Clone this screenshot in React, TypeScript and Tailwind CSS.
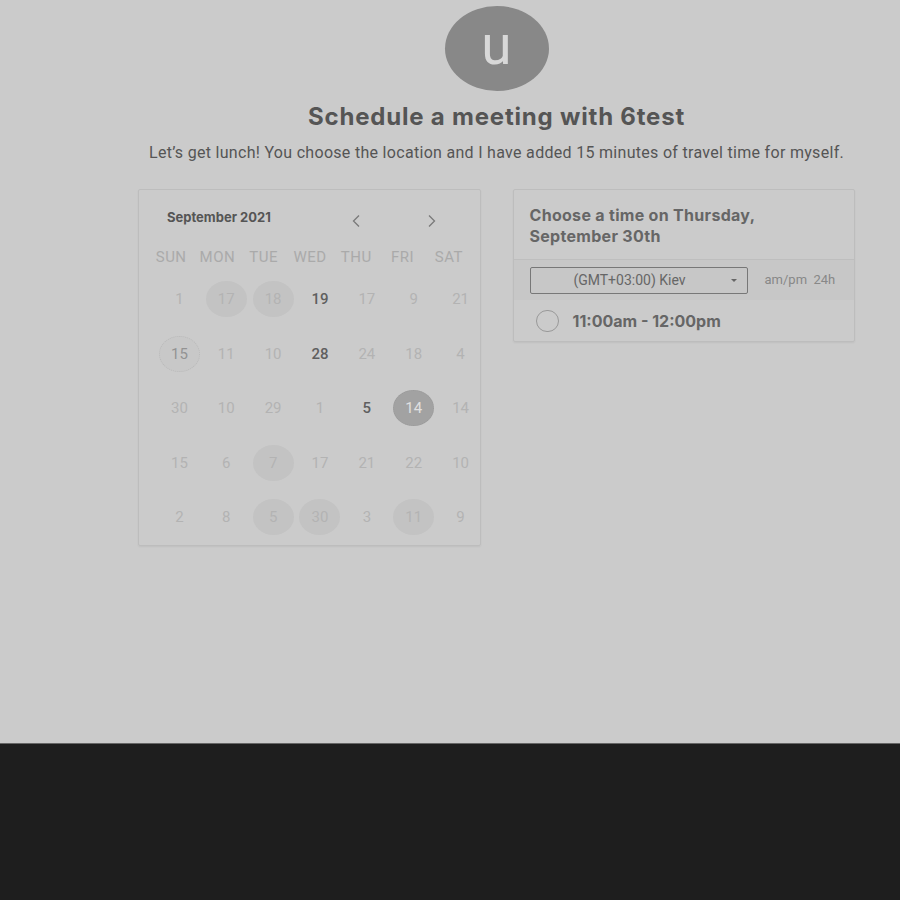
import React from "react";

type Day = { n: string; kind?: "circle" | "dark" | "dashed" | "selected" };

const weeks: Day[][] = [
  [{ n: "1" }, { n: "17", kind: "circle" }, { n: "18", kind: "circle" }, { n: "19", kind: "dark" }, { n: "17" }, { n: "9" }, { n: "21" }],
  [{ n: "15", kind: "dashed" }, { n: "11" }, { n: "10" }, { n: "28", kind: "dark" }, { n: "24" }, { n: "18" }, { n: "4" }],
  [{ n: "30" }, { n: "10" }, { n: "29" }, { n: "1" }, { n: "5", kind: "dark" }, { n: "14", kind: "selected" }, { n: "14" }],
  [{ n: "15" }, { n: "6" }, { n: "7", kind: "circle" }, { n: "17" }, { n: "21" }, { n: "22" }, { n: "10" }],
  [{ n: "2" }, { n: "8" }, { n: "5", kind: "circle" }, { n: "30", kind: "circle" }, { n: "3" }, { n: "11", kind: "circle" }, { n: "9" }],
];

const weekdays = ["SUN", "MON", "TUE", "WED", "THU", "FRI", "SAT"];

function DayCell({ day }: { day: Day }) {
  let cls = "text-[#b3b3b3]";
  if (day.kind === "circle") cls = "bg-[#c3c3c3] text-[#b3b3b3]";
  if (day.kind === "dark") cls = "text-[#5f5f5f] font-medium";
  if (day.kind === "dashed") cls = "bg-[#c8c8c8] text-[#939393] border border-dotted border-[#bababa]";
  if (day.kind === "selected") cls = "bg-[#a2a2a2] text-[#e0e0e0] border border-dotted border-[#9a9a9a]";
  return (
    <div className="flex items-center justify-center h-[54.5px]">
      <div className={`w-[41px] h-[36px] rounded-[50%] flex items-center justify-center text-[15px] ${cls}`}>
        {day.n}
      </div>
    </div>
  );
}

function Chevron({ dir }: { dir: "left" | "right" }) {
  return (
    <svg width="10" height="14" viewBox="0 0 10 14" className="shrink-0">
      <path
        d={dir === "left" ? "M8 1.5 L2.5 7 L8 12.5" : "M2 1.5 L7.5 7 L2 12.5"}
        fill="none"
        stroke="#7a7a7a"
        strokeWidth="1.3"
      />
    </svg>
  );
}

export default function App() {
  return (
    <div className="w-[900px] h-[900px] bg-[#1e1e1e] font-['Roboto','Liberation_Sans',sans-serif]">
      <div className="h-[744px] bg-[#cbcbcb] border-b border-[#666] pl-[93px] flex flex-col items-center">
        <div className="mt-[6px] w-[104px] h-[85px] rounded-[50%] bg-[#888] flex items-center justify-center">
          <span className="text-[55px] leading-none text-[#d8d8d8] -mt-[6px]">u</span>
        </div>
        <h1 className="mt-[12px] text-[24px] tracking-[0.8px] font-bold text-[#555] font-['Inter','Liberation_Sans',sans-serif] leading-[28px]">
          Schedule a meeting with 6test
        </h1>
        <p className="mt-[12px] text-[16px] tracking-[0.3px] text-[#555] leading-[20px]">
          Let’s get lunch! You choose the location and I have added 15 minutes of travel time for myself.
        </p>

        <div className="mt-[26px] w-full px-[45px] grid grid-cols-2 gap-[32px] items-start">
          <div className="h-[357px] border border-[#bdbdbd] rounded-[2px] shadow-[0_1px_2px_rgba(0,0,0,0.06)]">
            <div className="flex items-center h-[56px]">
              <span className="ml-[28px] w-[184px] text-[13px] font-bold text-[#555] font-['Inter','Liberation_Sans',sans-serif]">
                September 2021
              </span>
              <span className="mt-[6px] flex items-center">
                <Chevron dir="left" />
                <span className="w-[66px]" />
                <Chevron dir="right" />
              </span>
            </div>
            <div className="ml-[9px] w-[324px] grid grid-cols-7 text-[15px] tracking-[0.5px] text-[#aaa] h-[22px] items-center">
              {weekdays.map((w) => (
                <div key={w} className="text-center">{w}</div>
              ))}
            </div>
            <div className="mt-[4px] ml-[17px] w-[328px] grid grid-cols-7">
              {weeks.map((row, i) =>
                row.map((d, j) => <DayCell key={`${i}-${j}`} day={d} />)
              )}
            </div>
          </div>

          <div className="border border-[#bdbdbd] rounded-[2px] shadow-[0_1px_2px_rgba(0,0,0,0.06)]">
            <div className="px-[16px] pt-[15px] pb-[12px] border-b border-[#bebebe] text-[16px] tracking-[0.3px] font-bold text-[#666] leading-[21px] font-['Inter','Liberation_Sans',sans-serif]">
              Choose a time on Thursday,
              <br />
              September 30th
            </div>
            <div className="flex items-center px-[16px] h-[40px] bg-[#c7c7c7]">
              <div className="relative w-[218px] h-[27px] border border-[#777] rounded-[2px] flex items-center justify-center text-[14px] text-[#666]">
                <span className="-ml-[18px]">(GMT+03:00) Kiev</span>
                <span className="absolute right-[10px] top-[11px] w-0 h-0 border-l-[3.5px] border-r-[3.5px] border-t-[3.5px] border-l-transparent border-r-transparent border-t-[#666]" />
              </div>
              <span className="ml-[17px] text-[13px] text-[#888]">am/pm&nbsp;&nbsp;24h</span>
            </div>
            <div className="flex items-center px-[22px] h-[41px]">
              <span className="w-[23px] h-[22px] rounded-full border-[1.5px] border-[#999]" />
              <span className="ml-[14px] text-[16px] font-bold text-[#666] font-['Inter','Liberation_Sans',sans-serif]">
                11:00am - 12:00pm
              </span>
            </div>
          </div>
        </div>
      </div>
    </div>
  );
}
